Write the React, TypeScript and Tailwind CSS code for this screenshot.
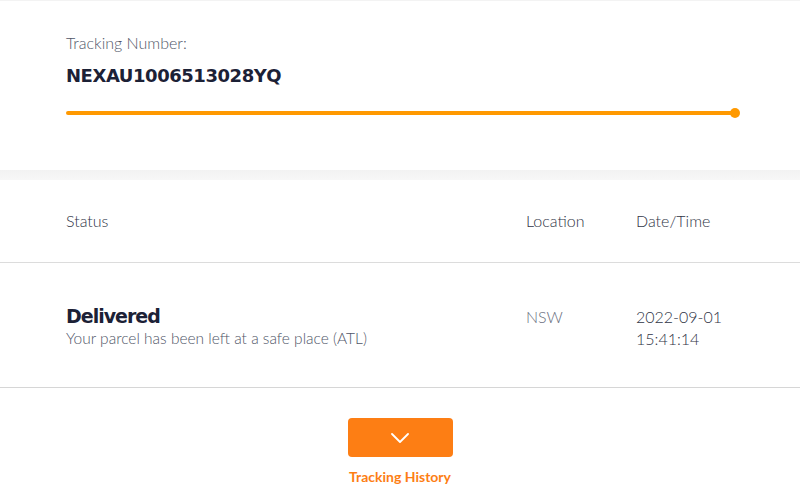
export default function App() {
  return (
    <div className="w-[800px] h-[500px] overflow-hidden bg-white" style={{ fontFamily: "Lato, 'Open Sans', sans-serif" }}>
      {/* tracking header card */}
      <div className="h-[170px] px-[66px] pt-[32px] border-t border-[#f3f3f3]">
        <div className="text-[16px] font-light text-[#505668] leading-[19px]">Tracking Number:</div>
        <div className="mt-[13px] text-[18px] font-bold text-[#1c2136] leading-[22px] tracking-[-0.45px]" style={{ fontFamily: "'DejaVu Sans', Inter, sans-serif" }}>
          NEXAU1006513028YQ
        </div>
        <div className="mt-[24px] relative h-[4px] w-[669px] rounded-full bg-[#ff9900]">
          <div className="absolute right-[-5px] top-[-3px] h-[10px] w-[10px] rounded-full bg-[#ff9900]" />
        </div>
      </div>
      <div className="h-[10px] bg-gradient-to-b from-[#f2f2f2] to-[#f7f7f7]" />

      {/* table */}
      <div className="flex h-[83px] items-center border-b border-[#dcdcdc] text-[16px] font-light text-[#2f3446]">
        <div className="pl-[66px] w-[526px]">Status</div>
        <div className="w-[110px]">Location</div>
        <div>Date/Time</div>
      </div>
      <div className="flex h-[125px] pt-[41px] border-b border-[#d6d6d6]">
        <div className="pl-[66px] w-[526px]">
          <div className="text-[19px] font-bold text-[#1c2136] leading-[24px] tracking-[-1px]" style={{ fontFamily: "'DejaVu Sans', Inter, sans-serif" }}>
            Delivered
          </div>
          <div className="text-[15.5px] font-light text-[#505668] leading-[20px]">Your parcel has been left at a safe place (ATL)</div>
        </div>
        <div className="w-[110px] pt-[2px] text-[16px] font-light text-[#6a6f7e] leading-[22px]">NSW</div>
        <div className="pt-[2px] text-[16px] font-light text-[#2f3446] leading-[22px]">
          <div>2022-09-01</div>
          <div>15:41:14</div>
        </div>
      </div>

      {/* history toggle */}
      <div className="flex flex-col items-center pt-[30px]">
        <button className="flex h-[39px] w-[105px] items-center justify-center rounded-[4px] bg-[#fd7e14]">
          <svg width="18" height="10" viewBox="0 0 18 10" fill="none">
            <path d="M1 1l8 8 8-8" stroke="white" strokeWidth="1.8" strokeLinecap="round" strokeLinejoin="round" />
          </svg>
        </button>
        <div className="mt-[9px] text-[14px] font-bold text-[#fd7e14]">Tracking History</div>
      </div>
    </div>
  );
}
